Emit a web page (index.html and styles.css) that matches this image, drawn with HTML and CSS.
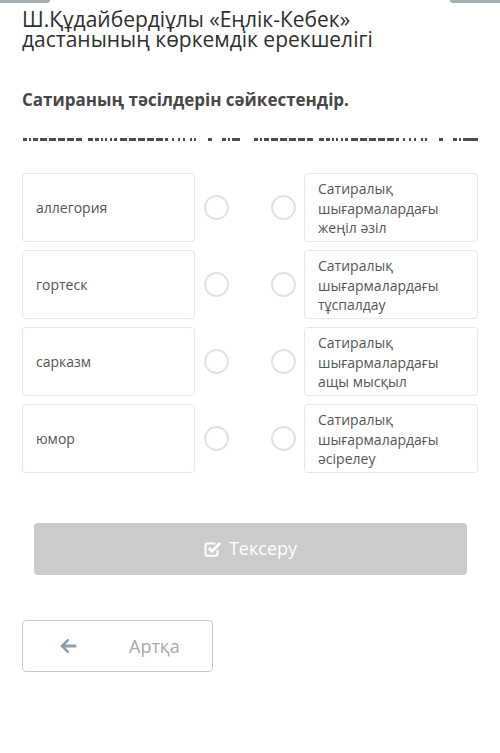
FILE: index.html
```html
<!DOCTYPE html>
<html lang="kk">
<head>
<meta charset="utf-8">
<title>Сатира</title>
<link rel="stylesheet" href="styles.css">
</head>
<body>
<div class="topbars"><span class="bar bar-left"></span><span class="bar bar-right"></span></div>
<main class="page">
  <h1 class="title">Ш.Құдайбердіұлы «Еңлік-Кебек» дастанының көркемдік ерекшелігі</h1>
  <h2 class="subtitle">Сатираның тәсілдерін сәйкестендір.</h2>
  <svg class="dashes" width="456" height="3" viewBox="0 0 456 3" aria-hidden="true">
    <g id="dash-group" fill="#4d4d4d">
      <rect x="1" y="0" width="4" height="3"/><rect x="7" y="0" width="2" height="3"/><rect x="11" y="0" width="5" height="3"/>
      <rect x="18" y="0" width="7" height="3"/><rect x="27" y="0" width="7" height="3"/><rect x="36" y="0" width="7" height="3"/>
      <rect x="45" y="0" width="7" height="3"/><rect x="54" y="0" width="6" height="3"/>
      <rect x="66" y="0" width="5" height="3"/><rect x="73" y="0" width="4" height="3"/><rect x="79" y="0" width="2" height="3"/>
      <rect x="83" y="0" width="2" height="3"/><rect x="88" y="0" width="2" height="3"/><rect x="92" y="0" width="3" height="3"/>
      <rect x="98" y="0" width="7" height="3"/><rect x="107" y="0" width="7" height="3"/><rect x="116" y="0" width="7" height="3"/>
      <rect x="125" y="0" width="7" height="3"/><rect x="134" y="0" width="7" height="3"/><rect x="143" y="0" width="3" height="3"/>
      <rect x="150" y="0" width="2" height="3"/><rect x="156" y="0" width="2" height="3"/><rect x="161" y="0" width="2" height="3"/>
      <rect x="168" y="0" width="2" height="3"/><rect x="172" y="0" width="2" height="3"/>
      <rect x="186" y="0" width="4" height="3"/>
      <rect x="200" y="0" width="4" height="3"/><rect x="206" y="0" width="2" height="3"/><rect x="210" y="0" width="8" height="3"/>
    </g>
    <use href="#dash-group" transform="translate(231 0)"/>
    <rect x="449" y="0" width="7" height="3" fill="#4d4d4d"/>
  </svg>

  <section class="match">
    <div class="row">
      <div class="card card-left">аллегория</div>
      <div class="dots"><span class="dot"></span><span class="dot"></span></div>
      <div class="card card-right">Сатиралық шығармалардағы жеңіл әзіл</div>
    </div>
    <div class="row">
      <div class="card card-left">гортеск</div>
      <div class="dots"><span class="dot"></span><span class="dot"></span></div>
      <div class="card card-right">Сатиралық шығармалардағы тұспалдау</div>
    </div>
    <div class="row">
      <div class="card card-left">сарказм</div>
      <div class="dots"><span class="dot"></span><span class="dot"></span></div>
      <div class="card card-right">Сатиралық шығармалардағы ащы мысқыл</div>
    </div>
    <div class="row">
      <div class="card card-left">юмор</div>
      <div class="dots"><span class="dot"></span><span class="dot"></span></div>
      <div class="card card-right">Сатиралық шығармалардағы әсірелеу</div>
    </div>
  </section>

  <button class="check-btn" type="button">
    <svg class="check-icon" width="18" height="17" viewBox="0 0 18 17" aria-hidden="true">
      <path d="M13.5 10V14a1.7 1.7 0 0 1-1.7 1.7H3.2A1.7 1.7 0 0 1 1.5 14V5.2A1.7 1.7 0 0 1 3.2 3.5h8.3" fill="none" stroke="#fff" stroke-width="2"/>
      <path d="M4.8 8l3.2 3.2 8.2-8.2" fill="none" stroke="#fff" stroke-width="2.8"/>
    </svg>
    <span>Тексеру</span>
  </button>

  <button class="back-btn" type="button">
    <svg class="back-icon" width="18" height="16" viewBox="0 0 18 16" aria-hidden="true">
      <path d="M8 1.2a1.3 1.3 0 0 1 1.8 1.8L6.3 6.5H16a1.5 1.5 0 0 1 0 3H6.3l3.5 3.5A1.3 1.3 0 0 1 8 14.8L1.2 8z" fill="#8d9daa"/>
    </svg>
    <span class="back-text">Артқа</span>
  </button>
</main>
</body>
</html>
```

FILE: styles.css
```css
* { box-sizing: border-box; }

html, body {
  margin: 0;
  padding: 0;
  background: #ffffff;
}

body {
  font-family: "Open Sans", "Noto Sans", "DejaVu Sans", sans-serif;
  color: #333;
}

.topbars {
  display: flex;
  justify-content: space-between;
  height: 3px;
}

.bar {
  display: block;
  width: 50px;
  height: 3px;
  background: #a3adb7;
}
.bar-left { border-bottom-right-radius: 3px; }
.bar-right { border-bottom-left-radius: 3px; }

.page {
  padding: 0 22px;
}

.title {
  margin: 6px 0 0;
  font-size: 21px;
  line-height: 20px;
  font-weight: 400;
  color: #2e2e2e;
}

.subtitle {
  margin: 39px 0 0;
  font-size: 17px;
  line-height: 24px;
  font-weight: 700;
  color: #474747;
}

.dashes {
  display: block;
  margin-top: 26px;
}

.match {
  margin-top: 32px;
  display: flex;
  flex-direction: column;
  gap: 8px;
}

.row {
  display: grid;
  grid-template-columns: 173px 1fr 174px;
  height: 69px;
}

.card {
  border: 1px solid #e6e6e6;
  border-radius: 4px;
  background: #fff;
  font-size: 14px;
  color: #555;
}

.card-left {
  display: flex;
  align-items: center;
  padding: 0 13px;
}

.card-right {
  padding: 5px 13px 0;
  line-height: 19.5px;
}

.dots {
  display: flex;
  align-items: center;
  justify-content: space-between;
  padding: 0 8px 0 9px;
}

.dot {
  width: 25px;
  height: 25px;
  border: 2px solid #e2e2e2;
  border-radius: 50%;
}

.check-btn {
  display: flex;
  align-items: center;
  justify-content: center;
  gap: 7px;
  width: calc(100% - 23px);
  height: 52px;
  margin: 50px 0 0 12px;
  border: none;
  border-radius: 4px;
  background: #cbcbcb;
  color: #fff;
  font-family: inherit;
  font-size: 18px;
  padding: 0 0 2px;
}

.check-icon { margin-top: 1px; }

.back-btn {
  display: flex;
  align-items: center;
  width: 191px;
  height: 52px;
  margin-top: 45px;
  padding: 0 0 0 36px;
  border: 1px solid #c9c9c9;
  border-radius: 4px;
  background: #fff;
  font-family: inherit;
  font-size: 18px;
  color: #a9a9a9;
}

.back-text {
  margin-left: 52px;
}
```
